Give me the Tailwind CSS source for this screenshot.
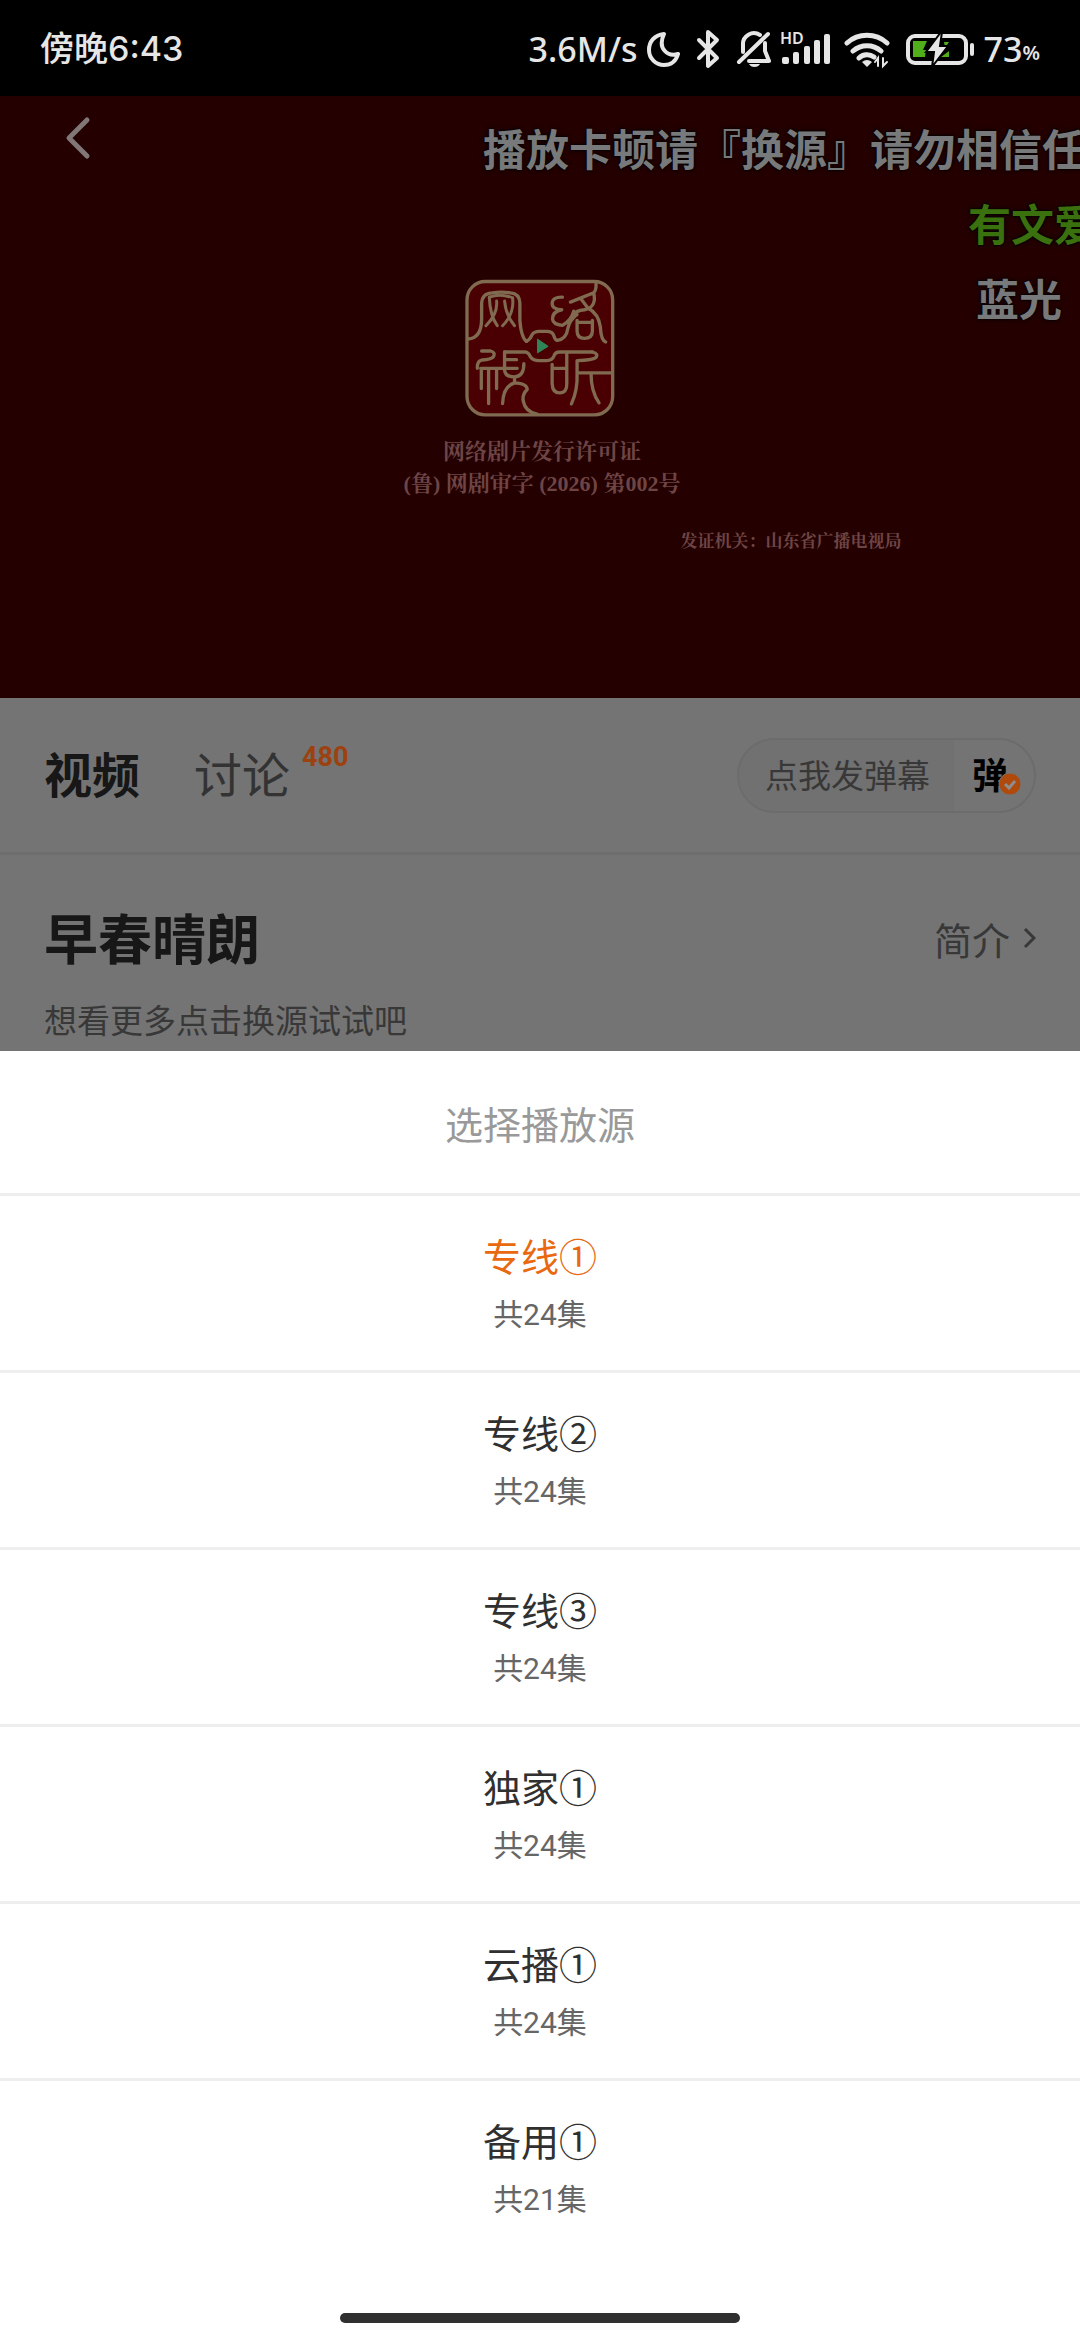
<!DOCTYPE html>
<html lang="zh-CN">
<head>
    <meta charset="UTF-8">
    <meta name="viewport" content="width=device-width, initial-scale=1.0">
    <title>早春晴朗</title>
    <script src="https://cdn.jsdelivr.net/npm/@tailwindcss/browser@4"></script>
</head>
<body class="min-h-screen flex flex-col bg-white overflow-x-hidden font-[Roboto,'Noto_Sans_CJK_SC',sans-serif]">
    <!-- Status bar -->
    <div class="h-24 shrink-0 bg-black text-[#e6e6e6] flex items-center justify-between px-10 pt-px font-medium">
        <div class="text-[34px] leading-12 font-[Inter,'Noto_Sans_CJK_SC',sans-serif]">傍晚6:43</div>
        <div class="flex items-center font-['Noto_Sans',sans-serif]">
            <span class="text-[34px] leading-12 mr-2">3.6M/s</span>
            <svg class="w-[34px] h-12 mr-4" viewBox="0 0 34 48" fill="none" stroke="currentColor" stroke-width="4" stroke-linejoin="round">
                <path d="M18 9C8 10 3 17 3 25a15 15 0 0 0 15 15c7 0 12-4 14-11-10 3-21-5-14-20z"/>
            </svg>
            <svg class="w-6 h-12 mr-4" viewBox="0 0 24 48" fill="none" stroke="currentColor" stroke-width="4" stroke-linejoin="round" stroke-linecap="round">
                <path d="M3 15 21 33 12 41V7l9 8L3 33"/>
            </svg>
            <svg class="w-9 h-12 mr-2" viewBox="0 0 36 48" fill="none" stroke="currentColor" stroke-width="4" stroke-linejoin="round" stroke-linecap="round">
                <path d="M3 37 32 9M7 27V20a11 11 0 0 1 17-10M29 18v8l4 10H13"/>
                <path d="M13 39h11a6 5 0 0 1-11 0z" fill="currentColor" stroke="none"/>
            </svg>
            <svg class="w-[52px] h-12 mr-3" viewBox="0 0 52 48" fill="currentColor">
                <text x="0" y="19" font-size="16" font-weight="600" font-family="Noto Sans">HD</text>
                <rect x="2" y="32" width="7" height="7" rx="2"/>
                <rect x="13" y="27" width="6" height="12" rx="2"/>
                <rect x="24" y="21" width="6" height="18" rx="2"/>
                <rect x="34" y="15" width="6" height="24" rx="2"/>
                <rect x="44" y="9" width="6" height="30" rx="2"/>
            </svg>
            <svg class="w-[46px] h-12 mr-4" viewBox="0 0 46 48" fill="none" stroke="currentColor" stroke-width="5" stroke-linecap="round">
                <path d="M3 18a30 30 0 0 1 40 0M9 26a21 21 0 0 1 28 0M15 33a12 12 0 0 1 15-1"/>
                <path d="m18 37 5 5 5-5q-5-4-10 0z" fill="currentColor" stroke="none"/>
                <path d="M34 41v-8l-3 4M39 33v8l4-4" stroke-width="2"/>
            </svg>
            <svg class="w-[70px] h-12 mr-2" viewBox="0 0 70 48" fill="none">
                <rect x="2" y="11" width="58" height="27" rx="7" stroke="currentColor" stroke-width="4"/>
                <path d="M66 20v9" stroke="currentColor" stroke-width="4" stroke-linecap="round"/>
                <path d="M7 16h14l-4 9h3l-1 7H7zM38 17h5l-4 6zM43 26v6h-8z" fill="#4fae1a"/>
                <path d="M35 7 20 27h8l-2 15 16-21h-8l2-14z" fill="currentColor" stroke="#000" stroke-width="2"/>
            </svg>
            <span class="text-[34px] leading-12">73</span><span class="text-xl leading-12 pt-2 font-semibold">%</span>
        </div>
    </div>

    <!-- Player -->
    <div class="relative shrink-0 h-[602px] bg-[#240000] overflow-hidden">
        <button type="button" aria-label="返回" class="absolute left-14 top-3 p-2">
            <svg class="w-7 h-11" viewBox="0 0 28 44" fill="none" stroke="#817777" stroke-width="5" stroke-linecap="round" stroke-linejoin="round">
                <path d="M23 4 5 22 23 40"/>
            </svg>
        </button>

        <!-- Danmaku -->
        <div class="absolute left-[483px] top-[18px] text-[43px] leading-[75px] font-bold whitespace-nowrap text-[#77797b] [text-shadow:0_0_4px_#000,0_0_2px_#000]">
            <p>播放卡顿请『换源』请勿相信任</p>
            <p class="pl-[485px] text-[#3a700e]">有文爱</p>
            <p class="pl-[493px]">蓝光</p>
        </div>

        <!-- Licence card -->
        <div class="flex flex-col items-center pt-[183px] font-bold text-[#6e4545] font-['Liberation_Serif','Noto_Serif_CJK_SC','Noto_Sans_CJK_SC',serif]">
            <svg class="w-[150px] h-[138px]" viewBox="253 56 451 414" fill="none" stroke="#806a50" stroke-width="10" stroke-linecap="round" stroke-linejoin="round">
                <rect x="259" y="63" width="438" height="401" rx="55" fill="#4a0003"/>
                <!-- 网 -->
                <path d="M262 236C290 234 303 215 303 175V128Q305 98 335 97Q362 93 390 97Q417 99 418 128V180Q422 232 438 243"/>
                <path d="M316 196Q352 160 348 122M326 110Q328 165 350 196M366 196Q402 160 396 112M372 122Q376 165 402 196M326 110Q360 98 396 112" stroke-width="9"/>
                <!-- 络 -->
                <path d="M546 110Q515 109 515 130Q515 147 544 148Q516 153 516 176Q518 193 546 195Q572 180 580 152M530 240Q558 236 562 205Q568 178 590 162M570 125 640 97Q648 90 647 68M640 97Q650 140 612 148Q585 150 580 165M602 116 622 142Q655 160 660 200Q662 240 676 245M590 180V212Q590 234 612 234Q636 234 636 212V180M590 186H636"/>
                <!-- frame -->
                <path d="M438 243Q450 236 454 224Q460 213 476 213H498Q516 213 520 226Q523 238 530 240M372 275H434Q444 276 450 290Q458 301 476 301H498Q516 300 520 288Q524 275 538 275H636"/>
                <path d="M472 237 503 258 472 277z" fill="#2f8558" stroke="#2f8558" stroke-width="3"/>
                <!-- 視 -->
                <path d="M303 272H330Q346 276 338 290Q330 297 305 299Q289 302 290 324M300 324H410M302 326V385M324 326V430M348 326V385M372 275V330Q374 350 402 350Q430 348 430 310M376 298H408M402 350V368Q368 378 366 430M402 368Q440 370 440 388Q425 402 428 422Q434 455 470 462"/>
                <!-- 听 -->
                <path d="M515 312V370Q516 398 538 398Q560 398 559 370V277M515 324H557M636 275Q656 280 646 292Q636 300 590 301V340Q592 390 573 431M592 338H696M632 340Q632 395 656 428"/>
            </svg>
            <div class="w-full pl-1 pt-[19px] flex flex-col items-center">
                <p class="text-[22px] leading-8">网络剧片发行许可证</p>
                <p class="text-[22px] leading-8">(鲁) 网剧审字 (2026) 第002号</p>
                <p class="mt-[26px] ml-[498px] text-[17px] leading-8">发证机关：山东省广播电视局</p>
            </div>
        </div>
    </div>

    <!-- Tabs -->
    <div class="shrink-0 h-[157px] bg-[#747474] border-b-3 border-[#6d6d6d] flex items-center justify-between px-11">
        <div class="flex items-center pt-1 text-[48px] leading-16">
            <button type="button" class="font-bold text-[#171717]">视频</button>
            <button type="button" class="ml-[54px] flex items-start text-[#333]">
                讨论<span class="ml-3 text-[27px] leading-6 font-bold text-[#9c4210]">480</span>
            </button>
        </div>
        <div class="flex h-[75px] rounded-full border-2 border-[#6c6c6c] overflow-hidden">
            <button type="button" class="bg-[#717171] pl-[26px] pr-6 pt-1 text-[33px] text-[#383838]">点我发弹幕</button>
            <button type="button" class="relative w-20 pl-[18px] pt-1 text-left text-[36px] font-bold text-black">弹
                <svg class="absolute left-11 top-8 w-6 h-6" viewBox="0 0 24 24">
                    <circle cx="12" cy="12" r="11" fill="#b04a0c" stroke="#747474" stroke-width="1"/>
                    <path d="m7 12 4 4 6-7" fill="none" stroke="#8d8d8d" stroke-width="3"/>
                </svg>
            </button>
        </div>
    </div>

    <!-- Title -->
    <div class="shrink-0 h-[196px] bg-[#747474] px-11 pt-[51px]">
        <div class="flex items-center justify-between">
            <h1 class="text-[54px] leading-[72px] font-bold text-[#171717]">早春晴朗</h1>
            <button type="button" class="flex items-center text-[38px] text-[#383838]">
                简介
                <svg class="ml-3 mb-2 w-[14px] h-6" viewBox="0 0 14 24" fill="none" stroke="currentColor" stroke-width="3">
                    <path d="m3 3 9 9-9 9"/>
                </svg>
            </button>
        </div>
        <p class="mt-5 text-[33px] leading-12 text-[#383838]">想看更多点击换源试试吧</p>
    </div>

    <!-- Source sheet -->
    <div class="grow bg-white flex flex-col text-center">
        <h2 class="pt-12 pb-10 text-[38px] leading-[54px] text-[#999]">选择播放源</h2>
        <ul class="text-[38px] leading-[54px] text-[#303030]">
            <li class="border-t-3 border-[#eee]">
                <button type="button" class="w-full pt-[35px] pb-[33px] text-[#e8690f]">专线①<span class="block mt-2 text-[30px] leading-11 text-[#666]">共24集</span></button>
            </li>
            <li class="border-t-3 border-[#eee]">
                <button type="button" class="w-full pt-[35px] pb-[33px]">专线②<span class="block mt-2 text-[30px] leading-11 text-[#666]">共24集</span></button>
            </li>
            <li class="border-t-3 border-[#eee]">
                <button type="button" class="w-full pt-[35px] pb-[33px]">专线③<span class="block mt-2 text-[30px] leading-11 text-[#666]">共24集</span></button>
            </li>
            <li class="border-t-3 border-[#eee]">
                <button type="button" class="w-full pt-[35px] pb-[33px]">独家①<span class="block mt-2 text-[30px] leading-11 text-[#666]">共24集</span></button>
            </li>
            <li class="border-t-3 border-[#eee]">
                <button type="button" class="w-full pt-[35px] pb-[33px]">云播①<span class="block mt-2 text-[30px] leading-11 text-[#666]">共24集</span></button>
            </li>
            <li class="border-t-3 border-[#eee]">
                <button type="button" class="w-full pt-[35px] pb-[33px]">备用①<span class="block mt-2 text-[30px] leading-11 text-[#666]">共21集</span></button>
            </li>
        </ul>
        <div class="mt-auto mb-[17px] mx-auto w-[37%] h-[10px] rounded-full bg-[#303030]"></div>
    </div>
</body>
</html>
